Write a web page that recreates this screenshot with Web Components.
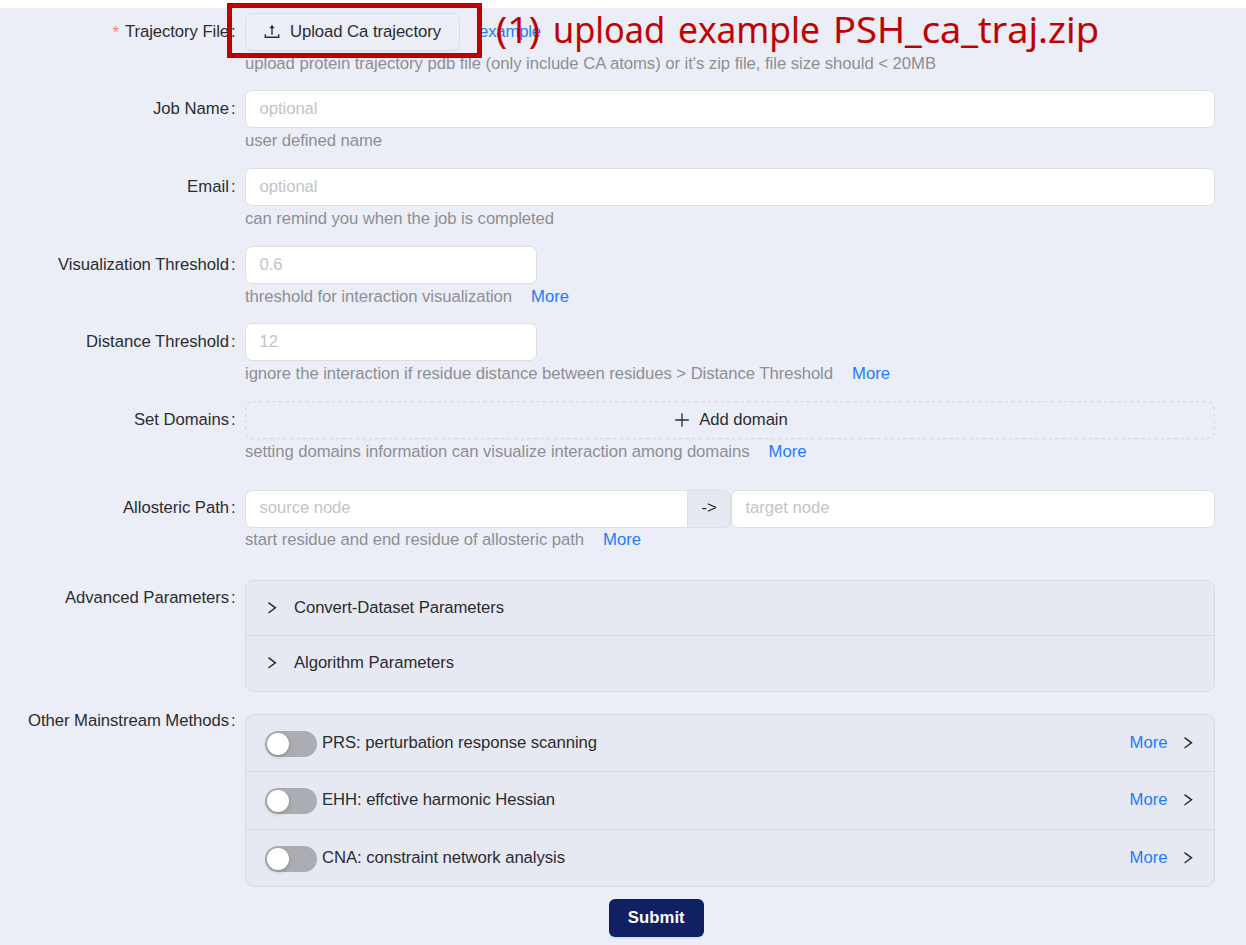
<!DOCTYPE html>
<html lang="en">
<head>
<meta charset="utf-8">
<title>Submit job</title>
<style>
html{background:#fff}
body{margin:0;padding-top:8px;height:945px;box-sizing:border-box;overflow:hidden;font:16.7px/26px "Liberation Sans",Arial,sans-serif;color:#2b2c30}
</style>
</head>
<body>
<job-form></job-form>
<script>
const define=(name,html,setup)=>{
  const t=document.createElement('template');t.innerHTML=html;
  customElements.define(name,class extends HTMLElement{
    connectedCallback(){
      if(this.shadowRoot)return;
      const r=this.attachShadow({mode:'open'});
      r.append(t.content.cloneNode(true));
      if(setup)setup(this,r);
    }
  });
};

// Text run whose tracking is adjusted to a known width
define('fit-text',`<style>:host{display:block;white-space:pre;height:26px}:host([stretch]){height:auto;margin:0}span{display:inline-block}</style><span><slot></slot></span>`,(el,r)=>{
  const w=+el.getAttribute('w');
  const s=r.querySelector('span');
  if(!w)return;
  el.style.width=w+'px';
  const n=el.textContent.length;
  const natural=s.getBoundingClientRect().width;
  if(el.hasAttribute('stretch')){s.style.transformOrigin='0 50%';s.style.transform='scaleX('+w/natural+')';}
  else s.style.letterSpacing=(w-natural)/n+'px';
});

define('form-row',`<style>
:host{display:grid;grid-template-columns:235px 970px;column-gap:10px;align-items:start}
.label{display:flex;justify-content:flex-end;align-items:center;height:37px}
.star{color:#ff7a7c;margin-right:6px;position:relative;top:1px}
.colon{width:4px;margin:0 0 0 2px}
:host([shift]) .label{margin-top:-12px}
</style><div class="label"></div><div><slot></slot></div>`,(el,r)=>{
  const l=r.querySelector('.label');
  l.innerHTML=(el.hasAttribute('required')?'<span class="star">*</span>':'')+`<fit-text w="${el.getAttribute('w')}">${el.getAttribute('label')}</fit-text><span class="colon">:</span>`;
  el.style.height=el.getAttribute('h')+'px';
});

define('text-field',`<style>
:host{display:flex;align-items:center;box-sizing:border-box;height:38px;border:1.5px solid #dfdfe1;border-radius:7px;background:#fff;color:#c4c4c6;padding:0 13.5px 1px}
:host([joined]){border-radius:7px 0 0 7px;border-right:0}
</style><slot></slot>`,(el)=>{el.style.width=el.getAttribute('w')+'px'});

define('help-line',`<style>:host{display:flex;gap:19px;height:26px;color:#8d8f94;margin-top:-.5px}</style><slot></slot>`);
define('text-link',`<style>:host{display:block;color:#1f7bff}</style><fit-text w="38">More</fit-text>`);

define('ui-icon',`<style>:host{display:block;width:16px;height:16px}svg{display:block;width:100%;height:100%;fill:none;stroke:currentColor}</style><svg viewBox="0 0 16 16"></svg>`,(el,r)=>{
  r.querySelector('svg').innerHTML={
    upload:'<path d="M8 10.8V2.5" stroke-width="1.4"/><path d="M5.5 4.2 8 .8l2.5 3.4z" fill="currentColor" stroke="none"/><path d="M1.3 10.2v3h13.4v-3" stroke-width="1.4"/>',
    plus:'<path d="M8 1.3v13.4M1.2 8h13.6" stroke-width="1.3"/>',
    right:'<path d="M4.4 2.6 11.4 7.8 4.4 13" stroke-width="1.5"/>',
    small:'<path d="M4.5 2.6 11.5 7.8 4.5 13" stroke-width="1.5"/>'
  }[el.getAttribute('name')];
});

define('outline-button',`<style>
:host{display:flex;align-items:center;justify-content:center;box-sizing:border-box;height:38px;border:1.5px solid #dbdcdf;border-radius:7px;box-shadow:0 2px 0 rgba(0,0,0,.015)}
:host([dashed]){border:0;width:970px;position:relative}
svg{position:absolute;inset:0;display:none;width:970px;height:38px;fill:none;stroke:#d7d8dc}
:host([dashed]) svg{display:block}
</style><svg><rect x=".6" y=".6" width="968.8" height="36.8" rx="7" stroke-width="1.2" stroke-dasharray="3 3.6"/></svg><slot></slot>`);

define('node-pair',`<style>
:host{display:flex}
.addon{box-sizing:border-box;width:44px;height:38px;border:1.5px solid #dfdfe1;border-radius:0 7px 7px 0;background:#e6e9f1;display:flex;align-items:center;justify-content:center;padding-bottom:1px}
</style><text-field w="442" joined><fit-text w="91">source node</fit-text></text-field><div class="addon"><fit-text w="15">-&gt;</fit-text></div><text-field w="484"><fit-text w="84">target node</fit-text></text-field>`);

define('panel-list',`<style>:host{display:block;box-sizing:border-box;width:970px;border:1.5px solid #dadbdd;border-radius:9px;background:#e6e9f1;overflow:hidden}</style><slot></slot>`);
define('panel-item',`<style>
:host{display:flex;box-sizing:border-box;border-top:1.3px solid #d8d9db;align-items:center}
:host(:first-child){border-top:0}
</style><slot></slot>`,(el)=>{el.style.height=el.getAttribute('h')+'px'});

define('toggle-switch',`<style>
:host{display:block;box-sizing:border-box;width:52px;height:26px;border-radius:13px;background:#abadb2;padding:2px}
i{display:block;width:22px;height:22px;border-radius:50%;background:#fff;box-shadow:0 2px 4px rgba(0,35,11,.2)}
</style><i></i>`);

define('method-row',`<style>
:host{display:flex;width:100%;align-items:center;padding-left:18.5px}
toggle-switch{margin-right:5.5px;position:relative;top:1px}
text-link{margin-left:auto}
ui-icon{margin:0 18.5px 0 12px}
</style><toggle-switch></toggle-switch><slot></slot><text-link></text-link><ui-icon name="small"></ui-icon>`);

define('submit-button',`<style>
:host{display:flex;align-items:center;justify-content:center;width:94.5px;height:38px;border-radius:6px;background:#112062;color:#fff;font-weight:700;box-shadow:0 2px 0 rgba(5,145,255,.1)}
</style><fit-text w="57">Submit</fit-text>`);

define('step-note',`<style>
:host{position:absolute;left:227px;top:3px;display:block;color:#c00000}
.frame{box-sizing:border-box;width:255px;height:55px;border:5px solid #c00000}
.words{position:absolute;left:269px;top:2px;height:50px;display:flex;gap:13px;font:36px/50px "Open Sans","Noto Sans",sans-serif;-webkit-text-stroke:.2px #c00000}
</style><div class="frame"></div><div class="words"><fit-text stretch w="44">(1)</fit-text><fit-text stretch w="112">upload</fit-text><fit-text stretch w="142">example</fit-text><fit-text stretch w="266">PSH_ca_traj.zip</fit-text></div>`);

define('job-form',`<style>
:host{display:block;box-sizing:border-box;height:937px;background:#ebeef6;padding-top:5px}
.first{display:flex;align-items:center;gap:19px}
.first outline-button{width:215px}
.first fit-text{margin-bottom:1px}
.first ui-icon{margin-right:10px}
.example{color:#1f7bff}
.addicon{margin:0 9px 0 2px}
.caret{margin:0 14px 0 18px}
submit-button{margin-left:609px}
</style>
<form-row required label="Trajectory File" w="104" h="77"><div class="first"><outline-button><ui-icon name="upload"></ui-icon><fit-text w="151">Upload Ca trajectory</fit-text></outline-button><fit-text class="example" w="62">example</fit-text></div><help-line><fit-text w="691">upload protein trajectory pdb file (only include CA atoms) or it's zip file, file size should &lt; 20MB</fit-text></help-line></form-row>
<form-row label="Job Name" w="76" h="78"><text-field w="970"><fit-text w="58">optional</fit-text></text-field><help-line><fit-text w="137">user defined name</fit-text></help-line></form-row>
<form-row label="Email" w="42" h="78"><text-field w="970"><fit-text w="58">optional</fit-text></text-field><help-line><fit-text w="309">can remind you when the job is completed</fit-text></help-line></form-row>
<form-row label="Visualization Threshold" w="171" h="77"><text-field w="291.5"><fit-text w="23">0.6</fit-text></text-field><help-line><fit-text w="267">threshold for interaction visualization</fit-text><text-link></text-link></help-line></form-row>
<form-row label="Distance Threshold" w="143" h="78"><text-field w="291.5"><fit-text w="18.5">12</fit-text></text-field><help-line><fit-text w="588">ignore the interaction if residue distance between residues &gt; Distance Threshold</fit-text><text-link></text-link></help-line></form-row>
<form-row label="Set Domains" w="95" h="88.5"><outline-button dashed><ui-icon class="addicon" name="plus"></ui-icon><fit-text w="88.5">Add domain</fit-text></outline-button><help-line><fit-text w="504.5">setting domains information can visualize interaction among domains</fit-text><text-link></text-link></help-line></form-row>
<form-row label="Allosteric Path" w="106" h="90"><node-pair></node-pair><help-line><fit-text w="339">start residue and end residue of allosteric path</fit-text><text-link></text-link></help-line></form-row>
<form-row label="Advanced Parameters" w="164" h="134.5"><panel-list><panel-item h="54.5"><ui-icon class="caret" name="right"></ui-icon><fit-text w="210">Convert-Dataset Parameters</fit-text></panel-item><panel-item h="55.5"><ui-icon class="caret" name="right"></ui-icon><fit-text w="160">Algorithm Parameters</fit-text></panel-item></panel-list></form-row>
<form-row shift label="Other Mainstream Methods" w="201" h="184.5"><panel-list><panel-item h="56"><method-row><fit-text w="275">PRS: perturbation response scanning</fit-text></method-row></panel-item><panel-item h="57.5"><method-row><fit-text w="233">EHH: effctive harmonic Hessian</fit-text></method-row></panel-item><panel-item h="57"><method-row><fit-text w="243">CNA: constraint network analysis</fit-text></method-row></panel-item></panel-list></form-row>
<submit-button></submit-button>
<step-note></step-note>`);
</script>
</body>
</html>
